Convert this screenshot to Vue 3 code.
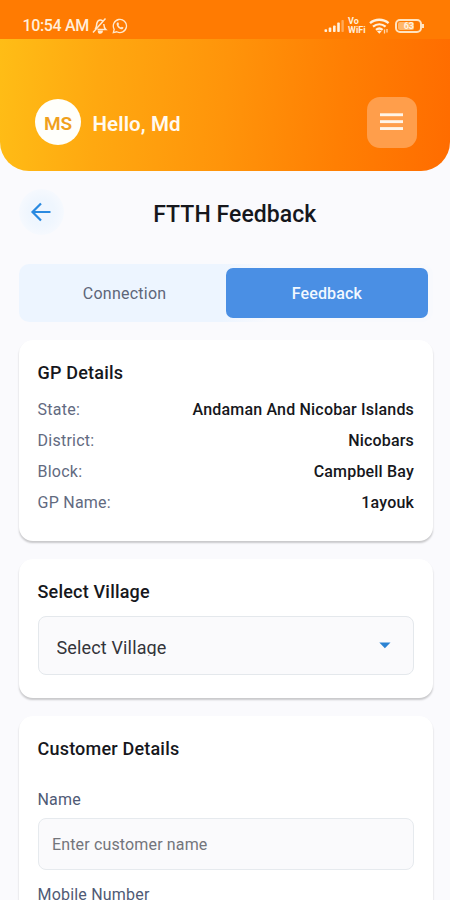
<script setup>
const details = [
  { label: 'State:', value: 'Andaman And Nicobar Islands' },
  { label: 'District:', value: 'Nicobars' },
  { label: 'Block:', value: 'Campbell Bay' },
  { label: 'GP Name:', value: '1ayouk' },
]
</script>

<template>
  <div class="screen">
    <div class="status">
      <span class="time">10:54 AM</span>
      <svg class="bell" width="16" height="18" viewBox="0 0 16 18" fill="none" stroke="#ffe9cf" stroke-width="1.5">
        <path d="M3 12.3 C4.8 11 4.4 8.5 4.8 6.5 C5.4 4.2 6.5 3 8.3 3 C9.3 3 10 3.3 10.7 3.8 M11.8 7 C12 9.5 12 11 13.8 12.6 H5.5 M1 15.5 L13.5 1.5" />
        <path d="M6.5 14.2 a1.8 1.8 0 0 0 3.6 0 z" fill="#ffe9cf" />
      </svg>
      <svg class="whatsapp" width="16" height="16" viewBox="0 0 16 16" fill="none" stroke="#ffe9cf" stroke-width="1.3">
        <path d="M1.3 14.7 L2.2 11.3 A6.6 6.6 0 1 1 4.8 13.8 Z" />
        <path d="M5.2 4.6 L6.4 4.5 L7.1 6.2 L6.4 7 C6.9 8.2 7.7 9 9 9.5 L9.8 8.7 L11.5 9.5 C11.3 11 10.3 11.5 9 11.2 C6.6 10.5 5 8.6 4.6 6.4 C4.5 5.6 4.7 5 5.2 4.6 Z" fill="#ffe9cf" stroke="none" />
      </svg>
      <div class="indicators">
        <svg width="21" height="14" viewBox="0 0 21 14" fill="#fff0dc">
          <rect x="0.5" y="10.3" width="2.6" height="2.7" rx="0.8" />
          <rect x="4.7" y="8.6" width="2.6" height="4.4" rx="0.8" />
          <rect x="9" y="6.4" width="2.6" height="6.6" rx="0.8" />
          <rect x="13.2" y="3.6" width="2.6" height="9.4" rx="0.8" />
          <rect x="17.4" y="1" width="2.4" height="12" rx="0.8" opacity="0.4" />
        </svg>
        <span class="vowifi"><span>Vo</span><span>WiFi</span></span>
        <svg class="wifi" width="21" height="17" viewBox="0 0 21 17" fill="none" stroke="#fff0dc" stroke-width="2.3">
          <path d="M1 5.2 C6.3 0.6 14.3 0.6 19.6 5.2 M4 8.6 C7.8 5.5 12.8 5.5 16.6 8.6 M7 11.8 C9 10.2 11.6 10.2 13.6 11.8" />
          <path d="M8 13.2 Q10.3 11.6 12.6 13.2 L10.3 15.8 Z" fill="#fff0dc" stroke="none" />
          <path d="M15.5 11.5 V15.5 M18 11 V14.5" stroke-width="1.3" opacity="0.8" />
        </svg>
        <span class="battery"><span class="level">63</span></span>
      </div>
    </div>

    <header class="header">
      <div class="avatar">MS</div>
      <div class="hello">Hello, Md</div>
      <button class="menu" aria-label="Menu">
        <svg width="23" height="18" viewBox="0 0 23 18" fill="#fff5e9">
          <rect x="0" y="0.3" width="23" height="2.9" />
          <rect x="0" y="7.2" width="23" height="2.9" />
          <rect x="0" y="14.1" width="23" height="2.9" />
        </svg>
      </button>
    </header>

    <main class="content">
      <div class="titlebar">
        <button class="back" aria-label="Back">
          <svg width="22" height="20" viewBox="0 0 22 20" fill="none" stroke="#2a8ae0" stroke-width="2.2">
            <path d="M20.5 10 H2.5 M11 1.5 L2.5 10 L11 18.5" />
          </svg>
        </button>
        <h1>FTTH Feedback</h1>
      </div>

      <div class="tabs">
        <div class="tab">Connection</div>
        <div class="tab active">Feedback</div>
      </div>

      <section class="card gp">
        <h2>GP Details</h2>
        <div v-for="d in details" :key="d.label" class="row">
          <span class="label">{{ d.label }}</span>
          <span class="value">{{ d.value }}</span>
        </div>
      </section>

      <section class="card village">
        <h2>Select Village</h2>
        <div class="select">
          <span class="choice">Select Village</span>
          <svg width="12" height="7" viewBox="0 0 12 7"><path d="M0.3 0.5 H11.5 L5.9 6.3 Z" fill="#2b83d3" /></svg>
        </div>
      </section>

      <section class="card customer">
        <h2>Customer Details</h2>
        <div class="field-label">Name</div>
        <div class="input">Enter customer name</div>
        <div class="field-label second">Mobile Number</div>
      </section>
    </main>
  </div>
</template>

<style>
body {
  overflow: hidden;
}
</style>

<style scoped>
.screen {
  width: 450px;
  height: 900px;
  overflow: hidden;
  box-sizing: border-box;
  background: #fafafd;
  font-family: Roboto, sans-serif;
  color: #16171c;
}
.screen * {
  box-sizing: border-box;
}
.status {
  height: 39px;
  background: #ff7b02;
  display: flex;
  align-items: center;
  padding: 13px 26px 0 22.5px;
  color: #ffeedb;
}
.time {
  font-size: 16px;
  font-weight: 500;
  line-height: 20px;
  letter-spacing: -0.35px;
}
.bell {
  margin-left: 3px;
}
.whatsapp {
  margin-left: 4px;
}
.indicators {
  display: flex;
  align-items: center;
  margin-left: auto;
}
.vowifi {
  display: flex;
  flex-direction: column;
  font-size: 9px;
  font-weight: 700;
  line-height: 9px;
  margin-left: 3px;
  width: 20px;
}
.wifi {
  margin-left: 1px;
}
.battery {
  position: relative;
  width: 27px;
  height: 14px;
  margin: 0 2px 0 5px;
  border: 2px solid #ffe3c0;
  border-radius: 5px;
  display: flex;
  padding: 1px;
}
.battery::after {
  content: '';
  position: absolute;
  right: -4px;
  top: 3px;
  width: 2px;
  height: 4px;
  background: #ffe3c0;
}
.level {
  width: 16px;
  border-radius: 2px;
  background: #ffb76a;
  color: #fff3e2;
  font-size: 9px;
  font-weight: 700;
  line-height: 8px;
  text-align: right;
}
.header {
  height: 132px;
  border-radius: 0 0 29px 29px;
  background: linear-gradient(94deg, #ffbd16 0%, #ffa810 22%, #ff940a 50%, #ff7f03 75%, #ff6c00 100%);
  display: flex;
  align-items: center;
  padding: 34px 33px 0 35px;
}
.avatar {
  width: 46px;
  height: 46px;
  border-radius: 50%;
  background: #fffffb;
  color: #f0a01c;
  font-size: 19px;
  font-weight: 600;
  display: flex;
  align-items: center;
  justify-content: center;
  padding-top: 2px;
}
.hello {
  margin-left: 11.5px;
  padding-top: 3px;
  color: #fffaf0;
  font-size: 20.5px;
  font-weight: 600;
  letter-spacing: 0.1px;
}
button {
  border: 0;
  padding: 0;
  display: flex;
  align-items: center;
  justify-content: center;
}
.menu {
  margin-left: auto;
  width: 50.5px;
  height: 51px;
  border-radius: 13px;
  background: #ff9e4b;
}
.content {
  padding: 18px 17px 0 18.5px;
}
.titlebar {
  display: flex;
  align-items: center;
  height: 46px;
}
.back {
  width: 45px;
  height: 46px;
  border-radius: 50%;
  background: radial-gradient(circle, #eff6fe 40%, #f6f9fe 72%);
}
h1 {
  flex: 1;
  margin: 5px 27px 0 0;
  text-align: center;
  font-size: 23px;
  font-weight: 500;
  line-height: 29px;
  letter-spacing: 0.05px;
}
.tabs {
  margin-top: 29px;
  height: 58px;
  border-radius: 10px;
  padding: 4px 5px;
  display: flex;
  background: linear-gradient(90deg, #edf5ff 0%, #edf5ff 49%, #f8f9fd 60%, #f8f9fd 100%);
}
.tab {
  flex: 1;
  height: 50px;
  border-radius: 7px;
  display: flex;
  align-items: center;
  justify-content: center;
  padding-top: 1px;
  font-size: 16px;
  letter-spacing: 0.25px;
  color: #5d6679;
}
.active {
  background: #4a8fe4;
  color: #f2f8ff;
  font-weight: 500;
  letter-spacing: 0.15px;
}
.card {
  background: #fff;
  border-radius: 14px;
  padding: 20px 19px 0;
  margin-top: 18px;
  box-shadow: 0 2px 2px -0.5px rgba(0, 0, 0, 0.2);
}
.gp {
  height: 201px;
  margin-top: 17.5px;
}
.village {
  height: 139px;
}
.customer {
  height: 240px;
}
h2 {
  margin: 0;
  font-size: 18px;
  font-weight: 500;
  line-height: 26px;
  letter-spacing: 0.2px;
}
.gp h2 {
  margin-bottom: 8px;
}
.row {
  display: flex;
  justify-content: space-between;
  font-size: 16px;
  line-height: 31.3px;
  letter-spacing: 0.25px;
}
.label {
  color: #626a7f;
}
.value {
  font-weight: 500;
  letter-spacing: 0.18px;
}
.select {
  margin-top: 11.5px;
  height: 59px;
  border: 1px solid #e4e8ec;
  border-radius: 8px;
  background: #fafafc;
  display: flex;
  align-items: center;
  justify-content: space-between;
  padding: 0 22px 0 18px;
}
.choice {
  font-size: 18px;
  line-height: 20px;
  height: 18px;
  overflow: hidden;
  margin-top: 3px;
  letter-spacing: 0.15px;
  color: #33343a;
}
.field-label {
  margin-top: 28px;
  font-size: 16px;
  line-height: 20px;
  letter-spacing: 0.2px;
  color: #4f5a75;
}
.input {
  margin-top: 8px;
  height: 52px;
  border: 1px solid #e6eaee;
  border-radius: 8px;
  background: #fafafc;
  display: flex;
  align-items: center;
  padding: 2px 14px 0 13.5px;
  font-size: 16px;
  letter-spacing: 0.15px;
  color: #73757b;
}
.second {
  margin-top: 15.5px;
}
</style>
